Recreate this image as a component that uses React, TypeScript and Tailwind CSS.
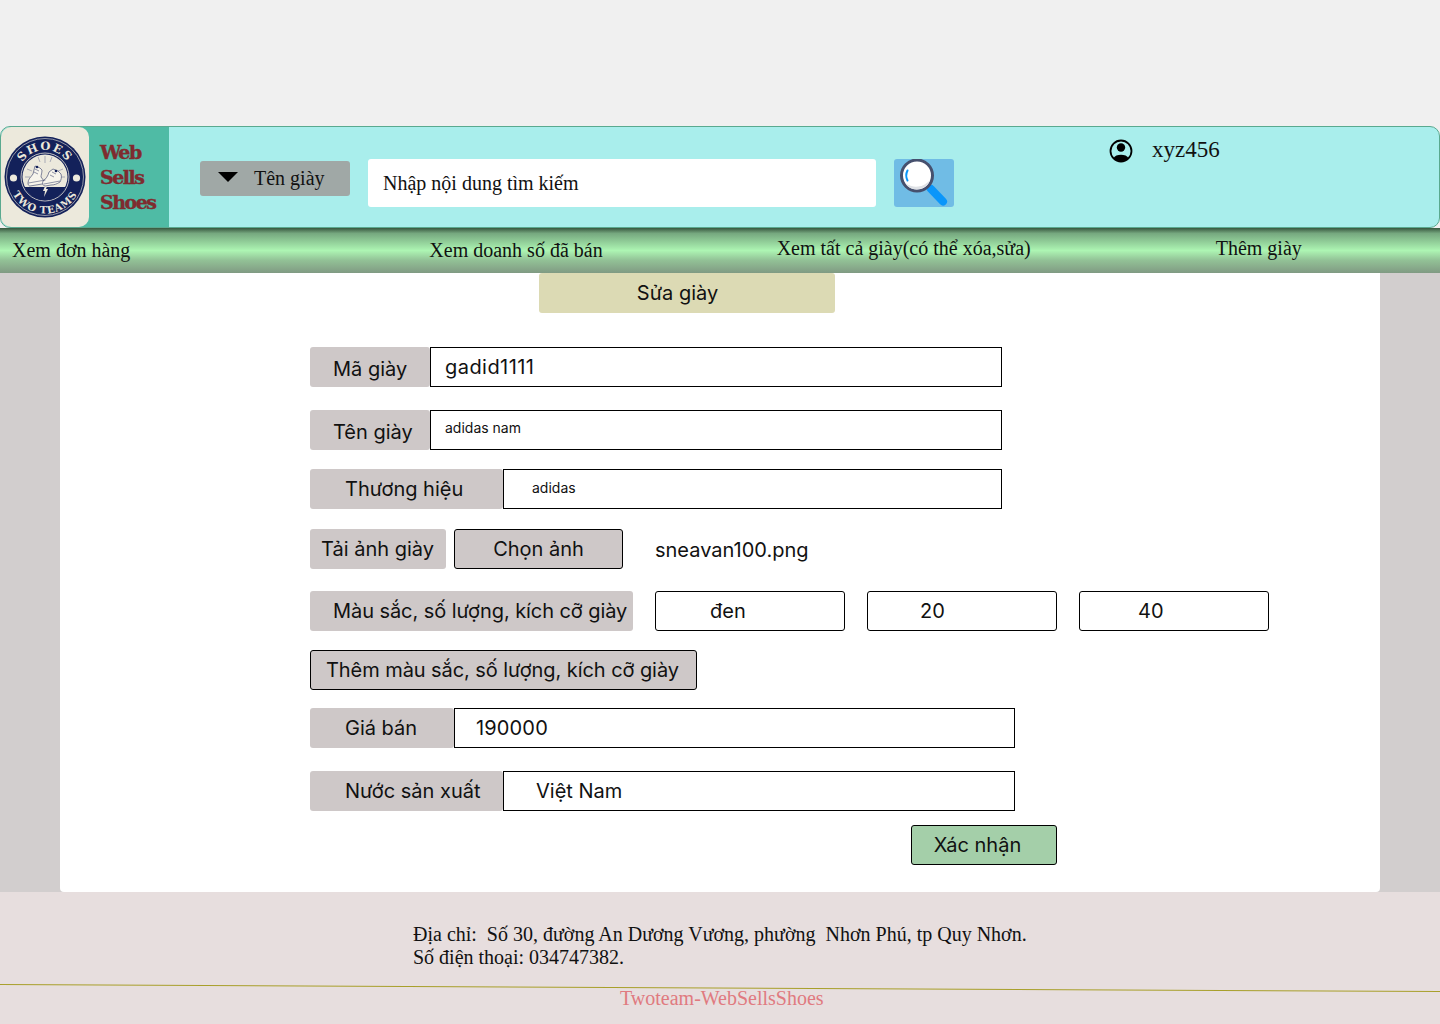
const serif = "font-['Liberation_Serif','Times_New_Roman',serif]"

function Logo() {
    return (
        <svg viewBox="0 0 82 82" className="w-[82px] h-[82px]">
            <defs>
                <path id="logoTop" d="M 14 41 A 27 27 0 0 1 68 41" />
                <path id="logoBottom" d="M 4.500 41 A 36.500 36.500 0 0 0 77.500 41" />
            </defs>
            <circle cx="41" cy="41" r="40.500" fill="#13215a" />
            <circle cx="41" cy="41" r="38.500" fill="none" stroke="#ece9dc" strokeWidth="0.6" />
            <circle cx="41" cy="41" r="24" fill="none" stroke="#ece9dc" strokeWidth="0.8" />
            <circle cx="41" cy="41" r="22.500" fill="#ece9dc" />
            <text fontFamily="'DejaVu Serif', serif" fontSize="11.500" fontWeight="700" fill="#ece9dc" letterSpacing="1.500">
                <textPath href="#logoTop" startOffset="50%" textAnchor="middle">SHOES</textPath>
            </text>
            <text fontFamily="'DejaVu Serif', serif" fontSize="10" fontWeight="700" fill="#ece9dc" letterSpacing="0.800">
                <textPath href="#logoBottom" startOffset="50%" textAnchor="middle">TWO TEAMS</textPath>
            </text>
            <circle cx="9.500" cy="42" r="3.600" fill="#ece9dc" />
            <circle cx="72.500" cy="42" r="3.600" fill="#ece9dc" />
            <path d="M 20.500 51 A 22.500 22.500 0 0 0 61.500 51 Z" fill="#13215a" />
            <path d="M41.500 49 l-2.500 6 h2 l-1 6 l4 -8 h-2 l1.500 -4 Z" fill="#ece9dc" />
            <path d="M41 20 v7 M34 21 l2 5 M48 21 l-2 5 M23 33 l5 2 M59 33 l-5 2 M21 41 h5 M61 41 h-5" stroke="#7d83a0" strokeWidth="0.6" />
            <g fill="#f7f5ec" stroke="#4a5275" strokeWidth="0.7" strokeLinejoin="round">
                <path d="M24 47 c0 -4 3 -6 5 -9 l2 -8 l5 2 l2 2 c0 3 -1 5 -1 7 l3 4 c1 2 0 3 -2 3 l-12 2 c-1 0 -2 -1 -2 -3 Z" />
                <path d="M39 45 c3 -2 5 -5 6 -9 l4 -3 l5 2 l3 3 c1 3 0 6 -1 8 c-3 2 -6 3 -9 3 l-6 1 c-2 0 -3 -3 -2 -5 Z" />
            </g>
            <path d="M24.500 47 l17 -3 M40 48 l16 -3 M30 36 l4 2 M31 33 l4 2 M46 39 l4 2 M48 36 l4 2" stroke="#4a5275" strokeWidth="0.6" />
            <circle cx="33" cy="31" r="1.300" fill="#13215a" />
            <circle cx="52" cy="35" r="1.300" fill="#13215a" />
        </svg>
    )
}

function SearchIcon() {
    return (
        <svg viewBox="0 0 60 48" className="w-[60px] h-[48px]">
            <path d="M37 30 L49 42.500" stroke="#0a96fa" strokeWidth="8" strokeLinecap="round" />
            <circle cx="23" cy="16.500" r="15.500" fill="#ffffff" stroke="#46506e" strokeWidth="3" />
            <path d="M11 24 A14 14 0 0 0 36 21 A18 18 0 0 1 11 24 Z" fill="#dfe2e6" />
            <path d="M13.500 11.500 A11 11 0 0 0 13.500 21.500" fill="none" stroke="#0a96fa" strokeWidth="2" strokeLinecap="round" />
        </svg>
    )
}

function UserIcon() {
    return (
        <svg viewBox="0 0 24 24" className="w-[24px] h-[24px]">
            <circle cx="12" cy="12" r="10.500" fill="none" stroke="#000" strokeWidth="1.800" />
            <circle cx="12" cy="8.500" r="4.200" fill="#000" />
            <path d="M4.500 19 C6.500 14.500 17.500 14.500 19.500 19 A10.500 10.500 0 0 1 4.500 19 Z" fill="#000" />
        </svg>
    )
}

function Label({ w, pl, children }: { w: string, pl: string, children: React.ReactNode }) {
    return <div className={`${w} ${pl} h-10 shrink-0 bg-[#cec8c8] rounded-[3px] flex items-center text-[20px] text-[#111]`}>{children}</div>
}

function Box({ w, pl, small, children }: { w: string, pl: string, small?: boolean, children: React.ReactNode }) {
    return (
        <div className={`${w} ${pl} h-10 shrink-0 bg-white border border-black flex items-center text-[#111] ${small ? 'text-[14px]' : 'text-[20px]'}`}>
            {children}
        </div>
    )
}

export default function App() {
    return (
        <div className="w-[1440px] h-[1024px] overflow-hidden bg-[#f0f0f0] font-['Inter',sans-serif]">
            <div className="h-[126px]"></div>

            <header className="h-[102px] flex items-stretch bg-[#a9eeec] border border-[#5aa98f] rounded-[10px]">
                <div className="w-[168px] flex bg-[#4fbba5] rounded-l-[10px]">
                    <div className="w-[88px] bg-[#ece9dc] rounded-[10px] flex items-center justify-center">
                        <Logo />
                    </div>
                    <div className="pl-[11px] pt-[13px] font-['DejaVu_Serif',serif] font-bold text-[#7f2b2f] text-[19px] leading-[25px] tracking-[-1.500px] [-webkit-text-stroke:0.4px_#7f2b2f]">
                        <div>Web</div>
                        <div>Sells</div>
                        <div>Shoes</div>
                    </div>
                </div>
                <div className={`flex items-start flex-1 ${serif}`}>
                    <div className="ml-[31px] mt-[34px] w-[150px] h-[35px] bg-[#a0a8a6] rounded-[3px] flex items-center text-[20px] text-[#111]">
                        <span className="ml-[18px] w-0 h-0 border-x-[10px] border-x-transparent border-t-[10px] border-t-black mb-[4px]"></span>
                        <span className="ml-[16px] mb-[1px]">Tên giày</span>
                    </div>
                    <div className="ml-[18px] mt-[32px] w-[508px] h-[48px] bg-white rounded-[3px] flex items-center pl-[15px] text-[20px] text-[#111]">
                        Nhập nội dung tìm kiếm
                    </div>
                    <div className="ml-[18px] mt-[32px] w-[60px] h-[48px] bg-[#70bce5] rounded-[3px]">
                        <SearchIcon />
                    </div>
                    <div className="ml-[155px] mt-[6px] flex items-center text-[23px] text-[#111]">
                        <UserIcon />
                        <span className="ml-[19px] mb-[2px]">xyz456</span>
                    </div>
                </div>
            </header>

            <nav className={`h-[45px] flex items-center bg-[linear-gradient(180deg,#37573f_0%,#76a87f_12%,#adf5b3_50%,#92c196_72%,#809a83_100%)] text-[20px] text-[#111] ${serif}`}>
                <span className="ml-[12px] mb-[1px]">Xem đơn hàng</span>
                <span className="ml-[299px] mb-[1px]">Xem doanh số đã bán</span>
                <span className="ml-[174px] mb-[5px]">Xem tất cả giày(có thể xóa,sửa)</span>
                <span className="ml-[185px] mb-[5px]">Thêm giày</span>
            </nav>

            <main className="h-[619px] bg-[#d2cece] px-[60px]">
                <div className="h-full bg-white rounded-b-[4px] pl-[250px]">
                    <div className="ml-[229px] w-[296px] h-[40px] bg-[#dcdab4] rounded-[3px] flex items-center justify-center pr-[19px] text-[20px] text-[#111]">Sửa giày</div>

                    <div className="flex mt-[34px]">
                        <Label w="w-[120px]" pl="pl-[23px] pt-[4px]">Mã giày</Label>
                        <Box w="w-[572px]" pl="pl-[14px] tracking-[0.45px]">gadid1111</Box>
                    </div>
                    <div className="flex mt-[23px]">
                        <Label w="w-[120px]" pl="pl-[23px] pt-[4px]">Tên giày</Label>
                        <Box w="w-[572px]" pl="pl-[14px] pb-[5px]" small>adidas nam</Box>
                    </div>
                    <div className="flex mt-[19px]">
                        <Label w="w-[193px]" pl="pl-[35px]">Thương hiệu</Label>
                        <Box w="w-[499px]" pl="pl-[28px] pb-[3px]" small>adidas</Box>
                    </div>
                    <div className="flex items-center mt-[20px]">
                        <Label w="w-[136px]" pl="pl-[11px]">Tải ảnh giày</Label>
                        <div className="ml-[8px] w-[169px] h-10 bg-[#cec8c8] border border-black rounded-[3px] flex items-center justify-center text-[20px] text-[#111]">Chọn ảnh</div>
                        <span className="ml-[32px] mt-[2px] text-[20px] text-[#111]">sneavan100.png</span>
                    </div>
                    <div className="flex mt-[22px]">
                        <Label w="w-[323px]" pl="pl-[23px] tracking-[-0.07px]">Màu sắc, số lượng, kích cỡ giày</Label>
                        <Box w="w-[190px] ml-[22px] rounded-[3px]" pl="pl-[54px]">đen</Box>
                        <Box w="w-[190px] ml-[22px] rounded-[3px]" pl="pl-[52px]">20</Box>
                        <Box w="w-[190px] ml-[22px] rounded-[3px]" pl="pl-[58px]">40</Box>
                    </div>
                    <div className="mt-[19px] w-[387px] h-10 bg-[#cec8c8] border border-black rounded-[3px] flex items-center pl-[15px] tracking-[-0.07px] text-[20px] text-[#111]">
                        Thêm màu sắc, số lượng, kích cỡ giày
                    </div>
                    <div className="flex mt-[18px]">
                        <Label w="w-[144px]" pl="pl-[35px]">Giá bán</Label>
                        <Box w="w-[561px]" pl="pl-[21px] tracking-[0.15px]">190000</Box>
                    </div>
                    <div className="flex mt-[23px]">
                        <Label w="w-[193px]" pl="pl-[35px]">Nước sản xuất</Label>
                        <Box w="w-[512px]" pl="pl-[32px]">Việt Nam</Box>
                    </div>
                    <div className="ml-[601px] mt-[14px] w-[146px] h-10 bg-[#a4cfa9] border border-black rounded-[3px] flex items-center justify-center pr-[13px] text-[20px] text-[#111]">
                        Xác nhận
                    </div>
                </div>
            </main>

            <footer className={`relative h-[132px] bg-[#e7dede] text-[#111] ${serif}`}>
                <div className="pl-[413px] pt-[31px] text-[20px] leading-[23px]">
                    <div className="whitespace-pre">Địa chỉ:  Số 30, đường An Dương Vương, phường  Nhơn Phú, tp Quy Nhơn.</div>
                    <div>Số điện thoại: 034747382.</div>
                </div>
                <div className="absolute left-0 top-[92px] w-[1440px] h-px bg-[#a89f2a] origin-left rotate-[0.28deg]"></div>
                <div className="absolute left-[620px] top-[91px] text-[20px] text-[#e07a80]">Twoteam-WebSellsShoes</div>
            </footer>
        </div>
    )
}
